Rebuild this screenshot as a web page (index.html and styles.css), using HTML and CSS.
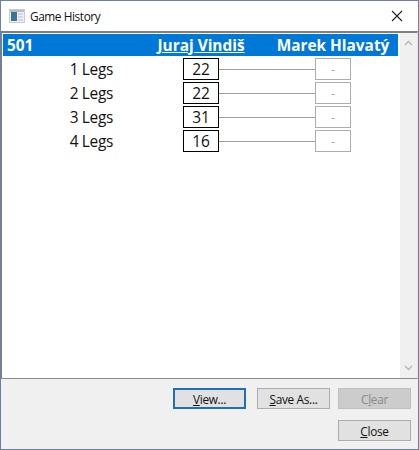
FILE: index.html
```html
<!DOCTYPE html>
<html lang="sk">
<head>
  <meta charset="UTF-8">
  <title>Game History</title>
  <link rel="stylesheet" href="styles.css">
</head>
<body>

  <div class="window">

    <!-- title bar -->
    <div class="titlebar">
      <svg class="app-icon" width="16" height="16" viewBox="0 0 16 16">
        <rect x="0.5" y="1.5" width="15" height="13" fill="#eef0f2" stroke="#c6ccd0"/>
        <rect x="1" y="2" width="14" height="2" fill="#b4bec6"/>
        <rect x="2" y="4" width="6" height="9" fill="#3f7394"/>
        <rect x="9" y="5" width="5" height="2" fill="#d9d4e4"/>
        <rect x="9" y="8" width="5" height="2" fill="#d9d4e4"/>
        <rect x="9" y="11" width="5" height="2" fill="#d9d4e4"/>
      </svg>
      <span class="title">Game History</span>
      <svg class="close-x" width="12" height="12" viewBox="0 0 12 12">
        <path d="M1 1 L11 11 M11 1 L1 11" stroke="#222" stroke-width="1.1" fill="none"/>
      </svg>
    </div>

    <!-- list -->
    <div class="list-frame">
      <div class="list">
        <div class="row head">
          <span class="game">501</span>
          <span class="name active">Juraj Vindiš</span>
          <span class="gap"></span>
          <span class="name">Marek Hlavatý</span>
        </div>
        <div class="row">
          <span class="legs">1 Legs</span>
          <span class="score">22</span>
          <span class="gap"><i class="line"></i></span>
          <span class="score off">-</span>
        </div>
        <div class="row">
          <span class="legs">2 Legs</span>
          <span class="score">22</span>
          <span class="gap"><i class="line"></i></span>
          <span class="score off">-</span>
        </div>
        <div class="row">
          <span class="legs">3 Legs</span>
          <span class="score">31</span>
          <span class="gap"><i class="line"></i></span>
          <span class="score off">-</span>
        </div>
        <div class="row">
          <span class="legs">4 Legs</span>
          <span class="score">16</span>
          <span class="gap"><i class="line"></i></span>
          <span class="score off">-</span>
        </div>
      </div>
      <div class="scrollbar">
        <svg width="9" height="6" viewBox="0 0 9 6"><path d="M1 5 L4.5 1.5 L8 5" stroke="#b5b5b5" stroke-width="1.4" fill="none"/></svg>
        <svg width="9" height="6" viewBox="0 0 9 6"><path d="M1 1 L4.5 4.5 L8 1" stroke="#b5b5b5" stroke-width="1.4" fill="none"/></svg>
      </div>
    </div>

    <!-- buttons -->
    <div class="footer">
      <div class="btn-row">
        <button class="btn default"><u>V</u>iew...</button>
        <button class="btn"><u>S</u>ave As...</button>
        <button class="btn disabled">C<u>l</u>ear</button>
      </div>
      <div class="btn-row">
        <button class="btn"><u>C</u>lose</button>
      </div>
    </div>

  </div>

</body>
</html>
```

FILE: styles.css
```css
html, body {
  margin: 0;
  padding: 0;
}

body {
  background: #f0f0f0;
  font-family: "Open Sans", "Noto Sans", sans-serif;
  color: #111;
}

.window {
  width: 419px;
  height: 450px;
  box-sizing: border-box;
  border: 1px solid #6c7fa8;
  display: flex;
  flex-direction: column;
  background: #f0f0f0;
}

.titlebar {
  height: 30px;
  flex: none;
  background: #fff;
  display: flex;
  align-items: center;
  padding: 0 0 0 8px;
  font-size: 11.8px;
  letter-spacing: -0.4px;
}

.title {
  margin-left: 5px;
  flex: 1;
}

.close-x {
  margin-right: 15px;
}

.list-frame {
  flex: none;
  display: flex;
  background: #fff;
  border-top: 2px solid #7a8088;
  border-bottom: 1px solid #8a8a8a;
  border-left: 1px solid #7a8088;
  border-right: 1px solid #e4e4e4;
  box-sizing: border-box;
  height: 348px;
}

.list {
  flex: 1;
  padding: 1px 2px 0 1px;
}

.row {
  height: 24px;
  display: flex;
  align-items: center;
}

.head {
  height: 22px;
  margin-bottom: 1px;
  background: #0078d7;
  color: #fff;
  font-weight: 700;
  font-size: 15.4px;
}

.game {
  width: 180px;
  box-sizing: border-box;
  padding-left: 4px;
}

.head .name {
  width: 36px;
  display: flex;
  justify-content: center;
  white-space: nowrap;
}

.active {
  text-decoration: underline;
}

.gap {
  width: 96px;
  display: block;
}

.line {
  display: block;
  height: 1px;
  background: #a0a0a0;
}

.legs {
  width: 110px;
  text-align: right;
  margin-right: 70px;
  font-size: 15.4px;
  letter-spacing: -0.3px;
}

.score {
  width: 36px;
  height: 22px;
  box-sizing: border-box;
  border: 1px solid #000;
  text-align: center;
  line-height: 20px;
  background: #fff;
  font-size: 15.5px;
}

.off {
  border-color: #adadad;
  color: #a8a8a8;
  font-size: 13px;
}

.scrollbar {
  width: 17px;
  flex: none;
  background: #f0f0f0;
  display: flex;
  flex-direction: column;
  justify-content: space-between;
  align-items: center;
  padding: 7px 0;
  box-sizing: border-box;
}

.footer {
  flex: 1;
  display: flex;
  flex-direction: column;
  gap: 11px;
  padding: 9px 7px 0 0;
}

.btn-row {
  display: flex;
  justify-content: flex-end;
  gap: 8px;
}

.btn {
  width: 73px;
  height: 21px;
  box-sizing: border-box;
  padding: 0;
  border: 1px solid #adadad;
  background: #e1e1e1;
  font-family: inherit;
  font-size: 11.8px;
  letter-spacing: -0.3px;
  color: #111;
}

.btn.default {
  border: 2px solid #1f6fb5;
  margin-right: 3px;
}

.btn.disabled {
  background: #cccccc;
  border-color: #bfbfbf;
  color: #8a8a8a;
}
```
